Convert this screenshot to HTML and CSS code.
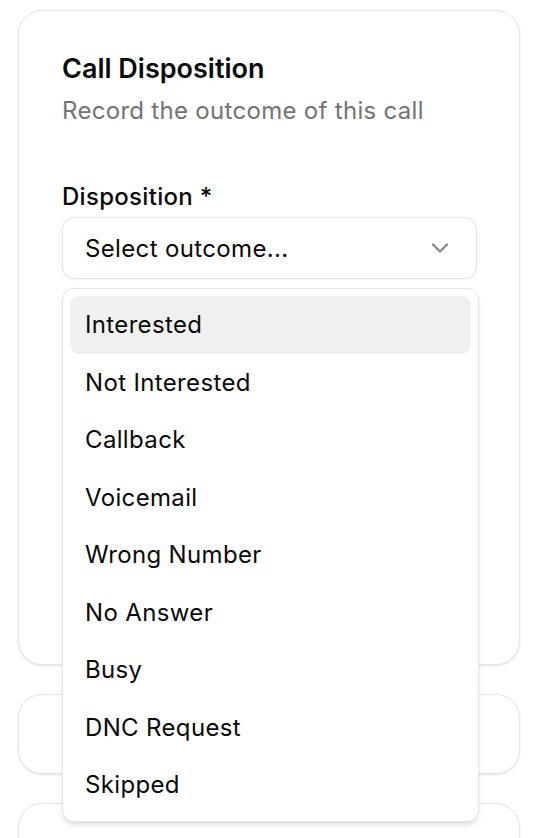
FILE: index.html
```html
<!DOCTYPE html>
<html lang="en">
<head>
<meta charset="utf-8">
<title>Call Disposition</title>
<link rel="stylesheet" href="styles.css">
</head>
<body>
<div class="page">
  <section class="card main">
    <header class="card-header">
      <h2 class="title">Call Disposition</h2>
      <p class="subtitle">Record the outcome of this call</p>
    </header>
    <div class="field">
      <label class="label">Disposition *</label>
      <div class="select">
        <button class="trigger" type="button">
          <span>Select outcome...</span>
          <svg class="chevron" viewBox="0 0 24 24" width="28" height="28" fill="none" stroke="currentColor" stroke-width="2" stroke-linecap="round" stroke-linejoin="round"><path d="m6 9 6 6 6-6"/></svg>
        </button>
        <div class="menu">
          <div class="item active">Interested</div>
          <div class="item">Not Interested</div>
          <div class="item">Callback</div>
          <div class="item">Voicemail</div>
          <div class="item">Wrong Number</div>
          <div class="item">No Answer</div>
          <div class="item">Busy</div>
          <div class="item">DNC Request</div>
          <div class="item">Skipped</div>
        </div>
      </div>
    </div>
  </section>
  <section class="card small"></section>
  <section class="card small"></section>
</div>
</body>
</html>
```

FILE: styles.css
```css
* { box-sizing: border-box; }
html, body { margin: 0; padding: 0; background: #ffffff; overflow: hidden; }
body {
  font-family: Inter, "Noto Sans", "Liberation Sans", sans-serif;
  color: #0a0a0a;
  height: 838px;
}
.page {
  display: flex;
  flex-direction: column;
  gap: 29px;
  padding: 10px 32px 0 18px;
  height: 838px;
  overflow: hidden;
}
.card {
  background: #fff;
  border: 1px solid #e5e5e5;
  border-radius: 24px;
  box-shadow: 0 1px 3px rgba(0,0,0,0.07), 0 1px 2px rgba(0,0,0,0.04);
  flex-shrink: 0;
}
.card.main {
  height: 655px;
  padding: 40px 43px;
}
.card.small { height: 80px; }
.card-header { display: flex; flex-direction: column; gap: 8px; }
.title {
  margin: 0;
  font-size: 27px;
  line-height: 36px;
  font-weight: 600;
  letter-spacing: 0;
}
.subtitle {
  margin: 0;
  font-size: 24px;
  line-height: 32px;
  color: #737373;
  letter-spacing: 0.3px;
}
.field { margin-top: 58px; display: flex; flex-direction: column; gap: 8px; }
.label { font-size: 24px; line-height: 24px; font-weight: 500; letter-spacing: 0.3px; }
.select { position: relative; }
.trigger {
  width: 415px;
  height: 62px;
  display: flex;
  align-items: center;
  justify-content: space-between;
  padding: 0 22px 0 22px;
  background: #fff;
  border: 1px solid #e5e5e5;
  border-radius: 12px;
  box-shadow: 0 1px 2px rgba(0,0,0,0.05);
  font: inherit;
  font-size: 24px;
  letter-spacing: 0.35px;
  color: #0a0a0a;
}
.chevron { width: 28px; height: 28px; color: #8a8a8a; flex-shrink: 0; }
.menu {
  position: absolute;
  top: 71px;
  left: 0;
  width: 417px;
  padding: 7px;
  background: #fff;
  border: 1px solid #e5e5e5;
  border-radius: 12px;
  box-shadow: 0 4px 6px -1px rgba(0,0,0,0.1), 0 2px 4px -2px rgba(0,0,0,0.1);
}
.item {
  height: 57.5px;
  display: flex;
  align-items: center;
  padding: 0 15px;
  font-size: 24px;
  letter-spacing: 0.35px;
  border-radius: 9px;
  color: #0a0a0a;
}
.item.active { background: #f0f0f0; }
```
